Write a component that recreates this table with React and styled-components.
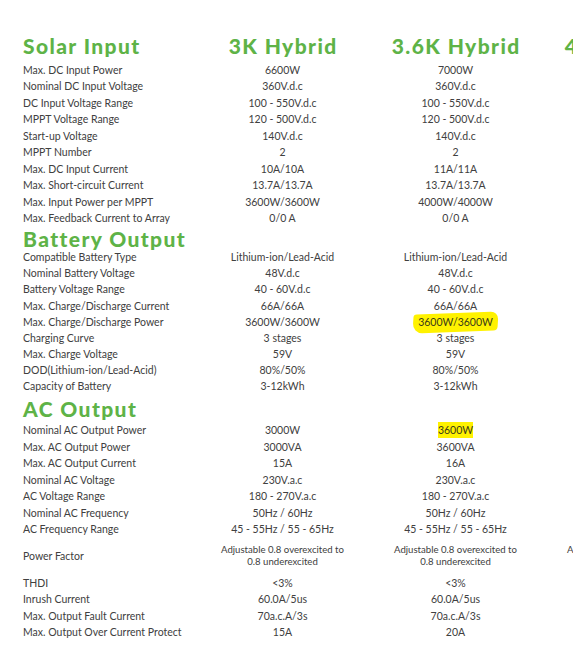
import React from 'react';
import styled, { createGlobalStyle } from 'styled-components';

const GlobalStyle = createGlobalStyle`
  html, body {
    margin: 0;
    padding: 0;
    background: #ffffff;
    overflow: hidden;
  }
  body {
    font-family: 'Lato', 'Open Sans', sans-serif;
  }
`;

const green = '#5eb347';
const textColor = '#404040';

const Sheet = styled.div`
  width: 715px;
  padding: 34.7px 0 20px 23px;
  box-sizing: border-box;
`;

const Section = styled.section`
  display: flex;
  flex-direction: column;
`;

const HeadRow = styled.div`
  display: grid;
  grid-template-columns: repeat(4, 173px);
  margin: ${p => p.$top}px 0 ${p => p.$bottom}px;
`;

const Heading = styled.h2`
  margin: 0;
  font-family: 'Lato', sans-serif;
  font-weight: 900;
  font-size: 21px;
  line-height: 21px;
  color: ${green};
  white-space: nowrap;
  letter-spacing: 1.4px;
`;

const ModelHeading = styled(Heading)`
  text-align: center;
  text-indent: 1.4px;
`;

const Row = styled.div`
  display: grid;
  grid-template-columns: repeat(4, 173px);
  align-items: center;
  height: ${p => p.$h}px;
  font-size: 10.5px;
  color: ${textColor};
`;

const Label = styled.div`
  white-space: nowrap;
  font-weight: 400;
`;

const Value = styled.div`
  text-align: center;
  white-space: ${p => (p.$multi ? 'pre-line' : 'nowrap')};
  font-size: ${p => (p.$multi ? '9.6px' : '10.5px')};
  line-height: ${p => (p.$multi ? '12px' : 'normal')};
`;

const Mark = styled.span`
  position: relative;
  display: inline-block;
  isolation: isolate;
  color: #3a3a1a;

  &::before {
    content: '';
    position: absolute;
    z-index: -1;
    background: #fff200;
    inset: ${p => (p.$brush ? '-3px -5px -4px -5px' : '-2px 0 -2px 0')};
    transform: ${p => (p.$brush ? 'rotate(-2.2deg) skewX(-6deg)' : 'none')};
    border-radius: ${p => (p.$brush ? '3px 8px 4px 10px' : '0')};
  }
`;

const models = ['3K Hybrid', '3.6K Hybrid', '4.6K Hybrid'];

const same = v => [v, v, v];

const sections = [
  {
    title: 'Solar Input',
    withModels: true,
    top: 0,
    bottom: 6,
    rowH: 16.5,
    rows: [
      ['Max. DC Input Power', '6600W', '7000W', '8000W'],
      ['Nominal DC Input Voltage', ...same('360V.d.c')],
      ['DC Input Voltage Range', ...same('100 - 550V.d.c')],
      ['MPPT Voltage Range', ...same('120 - 500V.d.c')],
      ['Start-up Voltage', ...same('140V.d.c')],
      ['MPPT Number', ...same('2')],
      ['Max. DC Input Current', '10A/10A', '11A/11A', '13A/13A'],
      ['Max. Short-circuit Current', '13.7A/13.7A', '13.7A/13.7A', '16.9A/16.9A'],
      ['Max. Input Power per MPPT', '3600W/3600W', '4000W/4000W', '4600W/4600W'],
      ['Max. Feedback Current to Array', ...same('0/0 A')],
    ],
  },
  {
    title: 'Battery Output',
    top: 1.5,
    bottom: 0,
    rowH: 16.1,
    rows: [
      ['Compatible Battery Type', ...same('Lithium-ion/Lead-Acid')],
      ['Nominal Battery Voltage', ...same('48V.d.c')],
      ['Battery Voltage Range', ...same('40 - 60V.d.c')],
      ['Max. Charge/Discharge Current', '66A/66A', '66A/66A', '100A/100A'],
      ['Max. Charge/Discharge Power', '3600W/3600W', { text: '3600W/3600W', brush: true }, '4600W/4600W'],
      ['Charging Curve', ...same('3 stages')],
      ['Max. Charge Voltage', ...same('59V')],
      ['DOD(Lithium-ion/Lead-Acid)', ...same('80%/50%')],
      ['Capacity of Battery', ...same('3-12kWh')],
    ],
  },
  {
    title: 'AC Output',
    top: 3.5,
    bottom: 3.4,
    rowH: 16.5,
    rows: [
      ['Nominal AC Output Power', '3000W', { text: '3600W' }, '4600W'],
      ['Max. AC Output Power', '3000VA', '3600VA', '4600VA'],
      ['Max. AC Output Current', '15A', '16A', '20A'],
      ['Nominal AC Voltage', ...same('230V.a.c')],
      ['AC Voltage Range', ...same('180 - 270V.a.c')],
      ['Nominal AC Frequency', ...same('50Hz / 60Hz')],
      ['AC Frequency Range', ...same('45 - 55Hz / 55 - 65Hz')],
      { label: 'Power Factor', multi: true, h: 37, values: same('Adjustable 0.8 overexcited to\n0.8 underexcited') },
      ['THDI', ...same('<3%')],
      ['Inrush Current', ...same('60.0A/5us')],
      ['Max. Output Fault Current', ...same('70a.c.A/3s')],
      ['Max. Output Over Current Protect', '15A', '20A', '25A'],
    ],
  },
];

const Cell = ({ value, multi }) => {
  if (value && typeof value === 'object') {
    return (
      <Value>
        <Mark $brush={value.brush}>{value.text}</Mark>
      </Value>
    );
  }
  return <Value $multi={multi}>{value}</Value>;
};

const SpecRow = ({ row, rowH }) => {
  const spec = Array.isArray(row) ? { label: row[0], values: row.slice(1) } : row;
  return (
    <Row $h={spec.h || rowH}>
      <Label>{spec.label}</Label>
      {spec.values.map((v, i) => (
        <Cell key={i} value={v} multi={spec.multi} />
      ))}
    </Row>
  );
};

const SpecSection = ({ section }) => (
  <Section>
    <HeadRow $top={section.top} $bottom={section.bottom}>
      <Heading>{section.title}</Heading>
      {section.withModels && models.map(m => <ModelHeading key={m}>{m}</ModelHeading>)}
    </HeadRow>
    {section.rows.map((row, i) => (
      <SpecRow key={i} row={row} rowH={section.rowH} />
    ))}
  </Section>
);

export default function App() {
  return (
    <>
      <GlobalStyle />
      <Sheet>
        {sections.map(s => (
          <SpecSection key={s.title} section={s} />
        ))}
      </Sheet>
    </>
  );
}
